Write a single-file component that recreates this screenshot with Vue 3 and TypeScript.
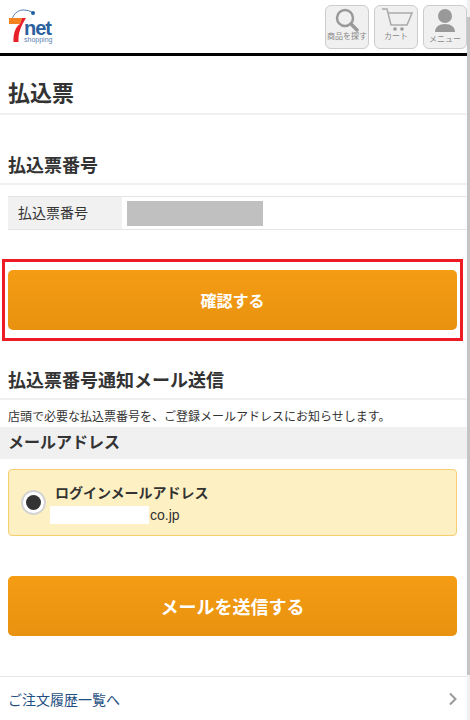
<template>
  <div class="page">
    <header class="header">
      <a class="logo" href="#">
        <svg width="60" height="50" viewBox="0 0 60 50">
          <path d="M12 20C13 14 18 10 23 10c4 0 8 1 10 3" fill="none" stroke="#5a7fb5" stroke-width="1" />
          <circle cx="33" cy="13" r="2" fill="#1f5ea8" />
          <path d="M9 18H22L20 24H9z" fill="#f58220" />
          <path d="M22 18h4C21 26 18 33 18.500 42h-5C13 33 16 26 20 24z" fill="#e8202a" />
        </svg>
        <span class="logo-net">net</span>
        <span class="logo-shop">shopping</span>
      </a>
      <nav class="nav">
        <a class="nav-btn" href="#">
          <svg width="42" height="26" viewBox="0 0 42 26">
            <circle cx="19" cy="12" r="8" fill="none" stroke="#999" stroke-width="2.500" />
            <path d="M25 18l6 6" stroke="#999" stroke-width="3.500" stroke-linecap="round" />
          </svg>
          <span>商品を探す</span>
        </a>
        <a class="nav-btn" href="#">
          <svg width="42" height="26" viewBox="0 0 42 26">
            <path d="M7 3h5l4 16h16l5-12H13" fill="none" stroke="#aaa" stroke-width="1.500" />
            <circle cx="20" cy="23" r="1.800" fill="#999" />
            <circle cx="27" cy="23" r="1.800" fill="#999" />
          </svg>
          <span>カート</span>
        </a>
        <a class="nav-btn menu" href="#">
          <svg width="42" height="26" viewBox="0 0 42 26">
            <circle cx="21" cy="10" r="7" fill="#999" />
            <path d="M11 26c0-5 4-8 10-8s10 3 10 8z" fill="#999" />
          </svg>
          <span>メニュー</span>
        </a>
      </nav>
    </header>

    <h1 class="title">払込票</h1>

    <h2 class="section">払込票番号</h2>
    <div class="number-row">
      <div class="number-label">払込票番号</div>
      <div class="number-value"><span class="mask"></span></div>
    </div>

    <div class="confirm-wrap">
      <button class="btn btn-small">確認する</button>
    </div>

    <h2 class="section mail">払込票番号通知メール送信</h2>
    <p class="note">店頭で必要な払込票番号を、ご登録メールアドレスにお知らせします。</p>
    <h3 class="sub">メールアドレス</h3>

    <label class="radio-card">
      <span class="radio"><span class="radio-dot"></span></span>
      <span class="radio-text">
        <strong>ログインメールアドレス</strong>
        <span class="addr"><span class="addr-mask"></span>co.jp</span>
      </span>
    </label>

    <div class="send-wrap">
      <button class="btn btn-large">メールを送信する</button>
    </div>

    <a class="history" href="#">
      <span>ご注文履歴一覧へ</span>
      <svg width="8" height="14" viewBox="0 0 8 14">
        <path d="M1 1.500l5.500 5.500-5.500 5.500" fill="none" stroke="#999" stroke-width="2" />
      </svg>
    </a>
    <div class="scrollbar"><div class="thumb"></div></div>
  </div>
</template>

<script setup lang="ts">
</script>

<style>
html, body {
  margin: 0;
  background: #fff;
  overflow: hidden;
}
</style>

<style scoped>
.page {
  width: 467px;
  height: 720px;
  font-family: "Liberation Sans", "Noto Sans CJK JP", sans-serif;
  color: #333;
}
.header {
  display: flex;
  justify-content: space-between;
  align-items: flex-start;
  height: 53px;
  border-bottom: 3px solid #000;
}
.logo {
  position: relative;
  display: block;
  width: 60px;
  height: 50px;
  text-decoration: none;
}
.logo svg {
  position: absolute;
  left: 0;
  top: 0;
}
.logo-net {
  position: absolute;
  left: 24px;
  top: 20px;
  font-size: 20px;
  font-weight: bold;
  line-height: 16px;
  color: #2b5f9e;
  letter-spacing: -1px;
}
.logo-shop {
  position: absolute;
  left: 24px;
  top: 36px;
  font-size: 7px;
  line-height: 8px;
  color: #5a7fb5;
}
.nav {
  display: flex;
  gap: 5px;
  margin-top: 5px;
}
.nav-btn {
  display: flex;
  flex-direction: column;
  align-items: center;
  box-sizing: border-box;
  width: 44px;
  height: 44px;
  background: #f0f0f0;
  border: 1px solid #ccc;
  border-radius: 6px;
  font-size: 8px;
  line-height: 10px;
  color: #888;
  text-decoration: none;
  white-space: nowrap;
}
.nav-btn.menu span {
  margin-top: 3px;
}
.title {
  margin: 0;
  padding: 0 8px;
  height: 57px;
  line-height: 76px;
  font-size: 22px;
  font-weight: bold;
  border-bottom: 2px solid #f0f0f0;
}
.section {
  margin: 0;
  padding: 1px 8px 5px;
  font-size: 18px;
  font-weight: bold;
  line-height: 24px;
  border-bottom: 2px solid #f0f0f0;
}
.title + .section {
  margin-top: 38px;
}
.number-row {
  display: flex;
  height: 32px;
  margin: 11px 0 0 8px;
  border-top: 1px solid #e4e4e4;
  border-bottom: 1px solid #e4e4e4;
}
.number-label {
  width: 114px;
  padding-left: 10px;
  box-sizing: border-box;
  background: #f1f1f1;
  font-size: 14px;
  line-height: 32px;
}
.number-value {
  display: flex;
  align-items: center;
  padding-left: 5px;
}
.mask {
  display: block;
  width: 136px;
  height: 25px;
  background: #c0c0c0;
}
.confirm-wrap {
  margin: 29px 4px 0 2px;
  padding: 8px 3px;
  border: 3px solid #ed1c24;
}
.btn {
  display: block;
  width: 100%;
  height: 60px;
  border: 0;
  border-radius: 5px;
  background: linear-gradient(#f59c14, #e8920f);
  color: #fff;
  font-family: inherit;
  font-weight: bold;
}
.btn-small {
  font-size: 16px;
}
.btn-large {
  font-size: 18px;
}
.section.mail {
  margin-top: 27px;
}
.note {
  margin: 0;
  padding: 8px 8px 0;
  font-size: 12px;
  line-height: 19px;
  white-space: nowrap;
}
.sub {
  margin: 0;
  padding: 0 8px;
  height: 32px;
  background: #f0f0f0;
  font-size: 16px;
  font-weight: bold;
  line-height: 32px;
}
.radio-card {
  display: flex;
  align-items: center;
  box-sizing: border-box;
  height: 67px;
  margin: 10px 10px 0 8px;
  padding-left: 12px;
  background: #fdf0c2;
  border: 1px solid #f6cf73;
  border-radius: 4px;
}
.radio {
  display: flex;
  align-items: center;
  justify-content: center;
  box-sizing: border-box;
  width: 25px;
  height: 25px;
  background: #fff;
  border: 2px solid #d4d4d4;
  border-radius: 50%;
}
.radio-dot {
  width: 15px;
  height: 15px;
  background: #333;
  border-radius: 50%;
}
.radio-text {
  display: flex;
  flex-direction: column;
  margin: 2px 0 0 4px;
}
.radio-text strong {
  padding-left: 5px;
  font-size: 14px;
  line-height: 20px;
}
.addr {
  display: flex;
  align-items: center;
  margin-top: 3px;
  font-size: 14px;
  line-height: 18px;
}
.addr-mask {
  width: 99px;
  height: 18px;
  margin-right: 1px;
  background: #fff;
}
.send-wrap {
  margin: 40px 10px 0 8px;
}
.history {
  display: flex;
  align-items: center;
  justify-content: space-between;
  height: 43px;
  margin-top: 40px;
  padding: 0 10px 0 8px;
  border-top: 1px solid #e8e8e8;
  color: #1f4f82;
  font-size: 14px;
  text-decoration: none;
}
.scrollbar {
  position: absolute;
  top: 0;
  right: 0;
  width: 3px;
  height: 720px;
  background: #f0f0f0;
}
.thumb {
  height: 658px;
  margin-top: 17px;
  background: #c4c4c4;
}
</style>
